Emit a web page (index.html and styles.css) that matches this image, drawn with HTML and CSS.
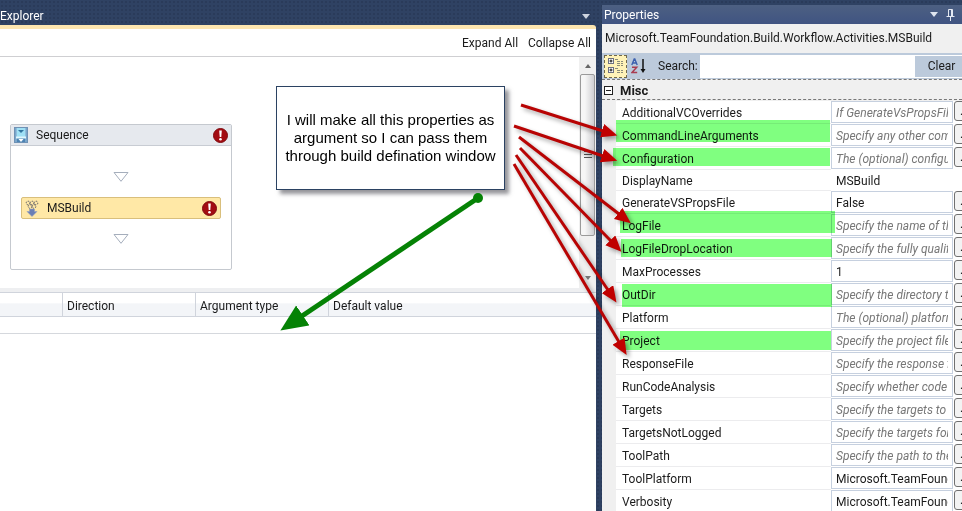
FILE: index.html
```html
<!DOCTYPE html>
<html lang="en">
<head>
<meta charset="utf-8">
<title>Workflow designer</title>
<link rel="stylesheet" href="styles.css">
</head>
<body>
<main class="ide">
  <section class="document">
    <header class="tabs">
      <span>Explorer</span>
      <button class="icon-button" aria-label="Open documents"><svg width="8" height="5" viewBox="0 0 8 5"><path d="M0 0H8L4 5Z" fill="#ced4df"/></svg></button>
    </header>
    <div class="sheet">
      <nav class="designer-bar">
        <button>Expand All</button>
        <button>Collapse All</button>
      </nav>
      <div class="designer">
        <div class="canvas">
          <div class="sequence">
            <div class="activity-head">
              <svg width="14" height="16" viewBox="0 0 14 16"><rect x=".5" y=".5" width="13" height="15" fill="#4d84b4" stroke="#6f92b5"/><rect x="2.500" y="1" width="9" height="10" fill="#9fe0f5"/><path d="M2 1V15M12 1V15" stroke="#a8c8e2"/><path d="M4 3H10L7 6Z" fill="#31759f"/><path d="M2 10.500H12" stroke="#dff6fc" stroke-width="2"/><path d="M4.500 12H9.500L7 15Z" fill="#fff"/></svg>
              <span>Sequence</span>
              <svg class="error" width="15" height="15" viewBox="0 0 15 15"><circle cx="7.500" cy="7.500" r="7" fill="#a30c12" stroke="#7f0a0e"/><path d="M6.200 2.500H8.800L8.300 9H6.700Z" fill="#fff"/><circle cx="7.500" cy="11.300" r="1.300" fill="#fff"/></svg>
            </div>
            <div class="steps">
              <svg width="16" height="10" viewBox="0 0 16 10"><path d="M1 .5H15L8 9.300Z" fill="#fff" stroke="#a5aebc"/></svg>
              <div class="activity">
                <svg width="14" height="17" viewBox="0 0 14 17"><g fill="none" stroke="#5f6068" stroke-dasharray="1.500 1"><circle cx="3" cy="3" r="1.800"/><circle cx="7" cy="3" r="1.800"/><circle cx="11" cy="3" r="1.800"/><circle cx="5" cy="6.500" r="1.800"/><circle cx="9" cy="6.500" r="1.800"/></g><path d="M4.500 9H9.500V11.500H12L7 16.500L2 11.500H4.500Z" fill="#6b7fb5" stroke="#929fc1" stroke-width=".6"/></svg>
                <span>MSBuild</span>
                <svg class="error" width="15" height="15" viewBox="0 0 15 15"><circle cx="7.500" cy="7.500" r="7" fill="#a30c12" stroke="#7f0a0e"/><path d="M6.200 2.500H8.800L8.300 9H6.700Z" fill="#fff"/><circle cx="7.500" cy="11.300" r="1.300" fill="#fff"/></svg>
              </div>
              <svg width="16" height="10" viewBox="0 0 16 10"><path d="M1 .5H15L8 9.300Z" fill="#fff" stroke="#a5aebc"/></svg>
            </div>
          </div>
        </div>
        <div class="scrollbar">
          <svg width="8" height="5" viewBox="0 0 8 5"><path d="M4 0L7 4H1Z" fill="#666"/></svg>
          <div class="thumb"><i></i><i></i><i></i></div>
          <svg width="8" height="5" viewBox="0 0 8 5"><path d="M1 0H7L4 4Z" fill="#777"/></svg>
        </div>
      </div>
      <table class="arguments">
        <thead><tr><th class="arg-name"></th><th class="arg-col">Direction</th><th class="arg-col">Argument type</th><th>Default value</th></tr></thead>
        <tbody><tr><td colspan="4"></td></tr></tbody>
      </table>
    </div>
  </section>

  <aside class="properties">
    <header class="panel-title">
      <span>Properties</span>
      <button class="icon-button" aria-label="Window position"><svg width="8" height="5" viewBox="0 0 8 5"><path d="M0 0H8L4 5Z" fill="#dfe5ef"/></svg></button>
      <button class="icon-button" aria-label="Auto hide"><svg width="9" height="12" viewBox="0 0 9 12"><path d="M2.500 7V.5H6.500V7M5.500 1V7M.5 7.500H8.500M4.500 8V12" fill="none" stroke="#e4e9f2"/></svg></button>
    </header>
    <div class="object-name">Microsoft.TeamFoundation.Build.Workflow.Activities.MSBuild</div>
    <div class="search-bar">
      <button class="mode selected" aria-label="Categorized"><svg width="18" height="18" viewBox="0 0 18 18"><g fill="#fff" stroke="#6d7180"><rect x="1.500" y="1.500" width="5" height="5"/><rect x="1.500" y="10.500" width="5" height="5"/></g><path d="M2.500 4H5.500M4 2.500V5.500M2.500 13H5.500M4 11.500V14.500" stroke="#111"/><path d="M8 2.500H12M10 4.500H16M10 6.500H16M10 8.500H16M8 11.500H12M10 13.500H16M10 15.500H16" stroke="#8a8c7a" stroke-dasharray="3 1"/></svg></button>
      <button class="mode" aria-label="Alphabetical"><svg width="15" height="16" viewBox="0 0 15 16"><path d="M.8 7L3.200 1H3.800L6.200 7M1.700 5H5.300" fill="none" stroke="#3c60ae" stroke-width="1.400"/><path d="M1 9.300H5.700L1 14.500H6.200" fill="none" stroke="#a93c50" stroke-width="1.500"/><path d="M12 1V13" stroke="#111" stroke-width="1.500"/><path d="M9.500 11H14.500L12 15Z" fill="#111"/></svg></button>
      <label for="search">Search:</label>
      <input id="search" type="text">
      <button class="clear">Clear</button>
    </div>
    <div class="category"><svg width="9" height="9" viewBox="0 0 9 9"><rect x=".5" y=".5" width="8" height="8" fill="#fff" stroke="#222"/><path d="M2 4.500H7" stroke="#222"/></svg><span>Misc</span></div>
    <div class="grid">
      <div class="row"><label for="p1">AdditionalVCOverrides</label><input id="p1" class="hint" value="If GenerateVsPropsFile is true, the contents"><button>...</button></div>
      <div class="row"><label for="p2">CommandLineArguments</label><input id="p2" class="hint" value="Specify any other command line arguments"><button>...</button></div>
      <div class="row"><label for="p3">Configuration</label><input id="p3" class="hint" value="The (optional) configuration to build"><button>...</button></div>
      <div class="row plain"><label for="p4">DisplayName</label><input id="p4" value="MSBuild"></div>
      <div class="row"><label for="p5">GenerateVSPropsFile</label><input id="p5" value="False"><button>...</button></div>
      <div class="row"><label for="p6">LogFile</label><input id="p6" class="hint" value="Specify the name of the log file"><button>...</button></div>
      <div class="row"><label for="p7">LogFileDropLocation</label><input id="p7" class="hint" value="Specify the fully qualified location"><button>...</button></div>
      <div class="row"><label for="p8">MaxProcesses</label><input id="p8" value="1"><button>...</button></div>
      <div class="row"><label for="p9">OutDir</label><input id="p9" class="hint" value="Specify the directory to build to"><button>...</button></div>
      <div class="row"><label for="p10">Platform</label><input id="p10" class="hint" value="The (optional) platform to build"><button>...</button></div>
      <div class="row"><label for="p11">Project</label><input id="p11" class="hint" value="Specify the project file to build"><button>...</button></div>
      <div class="row"><label for="p12">ResponseFile</label><input id="p12" class="hint" value="Specify the response file to use"><button>...</button></div>
      <div class="row"><label for="p13">RunCodeAnalysis</label><input id="p13" class="hint" value="Specify whether code analysis runs"><button>...</button></div>
      <div class="row"><label for="p14">Targets</label><input id="p14" class="hint" value="Specify the targets to build"><button>...</button></div>
      <div class="row"><label for="p15">TargetsNotLogged</label><input id="p15" class="hint" value="Specify the targets for which"><button>...</button></div>
      <div class="row"><label for="p16">ToolPath</label><input id="p16" class="hint" value="Specify the path to the tools"><button>...</button></div>
      <div class="row"><label for="p17">ToolPlatform</label><input id="p17" value="Microsoft.TeamFoundation.Build"><button>...</button></div>
      <div class="row"><label for="p18">Verbosity</label><input id="p18" value="Microsoft.TeamFoundation.Build"><button>...</button></div>
    </div>
  </aside>
</main>

<svg class="highlights" width="962" height="511" viewBox="0 0 962 511" fill="#80ff80">
  <rect x="616" y="120" width="214" height="22"/>
  <rect x="613" y="148" width="217" height="18"/>
  <rect x="620" y="211" width="215" height="22"/>
  <rect x="621" y="239" width="211" height="18"/>
  <rect x="622" y="284" width="210" height="23"/>
  <rect x="620" y="331" width="211" height="19"/>
</svg>
<p class="note">I will make all this properties as argument so I can pass them through build defination window</p>
<svg class="arrows" width="962" height="511" viewBox="0 0 962 511">
  <defs>
    <marker id="red" markerUnits="userSpaceOnUse" markerWidth="18" markerHeight="16" refX="1" refY="7" orient="auto"><path d="M0 0L16 7L0 14Z" fill="#c00000"/></marker>
    <marker id="green" markerUnits="userSpaceOnUse" markerWidth="28" markerHeight="26" refX="1" refY="12" orient="auto"><path d="M0 0L27 12L0 24Z" fill="#058205"/></marker>
  </defs>
  <g class="red-lines" stroke="#b80404" stroke-width="3">
    <path d="M521 105L603 131" marker-end="url(#red)"/>
    <path d="M514 126L603 156" marker-end="url(#red)"/>
    <path d="M519 137L619 214" marker-end="url(#red)"/>
    <path d="M520 148L611 241" marker-end="url(#red)"/>
    <path d="M516 155L608 290" marker-end="url(#red)"/>
    <path d="M514 164L619 342" marker-end="url(#red)"/>
  </g>
  <circle cx="478" cy="198" r="5" fill="#058205"/>
  <path d="M478 198L302 316" stroke="#058205" stroke-width="5" marker-end="url(#green)"/>
</svg>
</body>
</html>
```
FILE: styles.css
```css
* { box-sizing: border-box; }

body {
  margin: 0;
  height: 100vh;
  overflow: hidden;
  position: relative;
  font: 12px/16px Roboto, "Open Sans", sans-serif;
  color: #1b1b1b;
}

button, input {
  font: inherit;
  color: inherit;
  margin: 0;
  padding: 0;
  border: 0;
  background: none;
}

svg { display: block; flex: none; }

.ide {
  display: flex;
  gap: 6px;
  height: 100%;
  background-color: #2f4263;
  background-image: radial-gradient(#2a3b5a 1px, transparent 1px);
  background-size: 4px 4px;
}

.document {
  flex: 1;
  min-width: 0;
  display: flex;
  flex-direction: column;
}

.tabs {
  height: 25px;
  flex: none;
  display: flex;
  align-items: center;
  justify-content: space-between;
  padding: 7px 6px 0 0;
  color: #fff;
}

.sheet {
  flex: 1;
  min-height: 0;
  display: flex;
  flex-direction: column;
  background: #fff;
  border-top: 4px solid #fde6b0;
  border-top-right-radius: 3px;
}

.designer-bar {
  height: 28px;
  flex: none;
  display: flex;
  justify-content: flex-end;
  gap: 10px;
  padding-right: 5px;
  border-bottom: 1px solid #cfcfd2;
}

.designer {
  display: flex;
  height: 231px;
  flex: none;
}

.canvas { flex: 1; padding: 67px 10px 0; }

.sequence {
  width: 222px;
  height: 146px;
  border: 1px solid #c5c9cf;
  border-radius: 2px;
}

.activity-head {
  display: flex;
  align-items: center;
  gap: 8px;
  height: 21px;
  padding: 0 3px;
  background: #e6e9ee;
  border-bottom: 1px solid #c8ccd3;
}

.error { margin-left: auto; }

.steps {
  display: flex;
  flex-direction: column;
  align-items: center;
  gap: 15px;
  padding: 26px 10px 0;
}

.activity {
  align-self: stretch;
  display: flex;
  align-items: center;
  gap: 8px;
  height: 22px;
  padding: 0 3px;
  background: #ffe8a6;
  border: 1px solid #d9bf7c;
  border-radius: 2px;
}

.scrollbar {
  width: 17px;
  display: flex;
  flex-direction: column;
  align-items: center;
  justify-content: space-between;
  padding: 7px 1px;
  background: #f0f0f0;
}

.thumb {
  width: 100%;
  height: 162px;
  margin-bottom: 36px;
  display: flex;
  flex-direction: column;
  justify-content: center;
  align-items: center;
  gap: 2px;
  border: 1px solid #9a9a9a;
  border-radius: 2px;
  background: linear-gradient(90deg, #f6f6f6 30%, #cfcfd2);
}

.thumb i { width: 8px; height: 1px; background: #555; }

.arguments {
  width: 100%;
  border-collapse: separate;
  border-spacing: 0;
  table-layout: fixed;
  border-top: 4px solid #eeeff1;
}

.arguments th {
  height: 25px;
  padding: 2px 4px 0;
  text-align: left;
  font-weight: 400;
  border: 1px solid #d0d4dc;
  border-width: 1px 1px 1px 0;
  background: linear-gradient(#fff 45%, #f3f5f8 46%);
}

.arguments th:last-child { border-right: 0; }
.arguments .arg-name { width: 63px; }
.arguments .arg-col { width: 133px; }
.arguments td { height: 17px; padding: 0; border-bottom: 1px solid #d5d8dd; }

.properties {
  width: 360px;
  flex: none;
  display: flex;
  flex-direction: column;
  margin-top: 5px;
  overflow: hidden;
  background: #f0f0f0;
}

.panel-title {
  display: flex;
  align-items: center;
  gap: 8px;
  height: 19px;
  flex: none;
  padding: 0 7px 0 2px;
  color: #fff;
  background: linear-gradient(#4d6082, #405482);
}

.panel-title span { flex: 1; }

.object-name { height: 29px; flex: none; padding: 6px 3px; }

.search-bar {
  display: flex;
  align-items: center;
  height: 26px;
  flex: none;
  padding-left: 2px;
  background: #bccadb;
}

.mode { width: 23px; height: 23px; display: grid; place-items: center; }
.mode.selected { background: #fff3b8; border: 1px dashed #70684a; }
.mode + label { width: 50px; padding-left: 8px; }
.search-bar input { flex: 1; min-width: 0; height: 23px; background: #fff; }

.clear {
  width: 48px;
  height: 23px;
  padding-left: 6px;
  border: 1px solid #fff;
  border-right: 0;
}

.category {
  display: flex;
  align-items: center;
  gap: 7px;
  height: 21px;
  flex: none;
  padding: 2px 2px 0;
  font-size: 13px;
  font-weight: 700;
  border: 1px dashed #777;
  border-width: 1px 0;
}

.grid { padding: 1px 0 0 14px; }

.row {
  display: grid;
  grid-template-columns: 215px 122px 22px;
  height: 23px;
  background: #fff;
}

.row.plain { height: 21px; }

.row label {
  padding: 4px 6px 2px;
  border-bottom: 1px solid #ececee;
}

.row input {
  width: 100%;
  height: 22px;
  padding: 1px 4px 0;
  border: 1px solid #c6d0df;
}

.row.plain label { padding: 3px 6px 1px; }
.row.plain input { height: 20px; border-color: transparent; }
.row .hint { font-style: italic; color: #777; }

.row button {
  height: 20px;
  margin-left: 1px;
  padding-left: 5px;
  text-align: left;
  border: 1px solid #707070;
  border-radius: 3px;
  background: #f3f3f3;
}

.highlights, .arrows {
  position: absolute;
  top: 0;
  left: 0;
  pointer-events: none;
}

.highlights { mix-blend-mode: multiply; }
.red-lines { filter: drop-shadow(3px 3px 2px rgba(0, 0, 0, .35)); }

.note {
  position: absolute;
  top: 86px;
  left: 276px;
  width: 229px;
  margin: 0;
  padding: 24px 4px;
  border: 1px solid #2b4262;
  background: #fff;
  box-shadow: 4px 4px 4px rgba(60, 60, 70, .55);
  font: 15px/18px "Liberation Sans", Arial, sans-serif;
  text-align: center;
  color: #000;
}
```
